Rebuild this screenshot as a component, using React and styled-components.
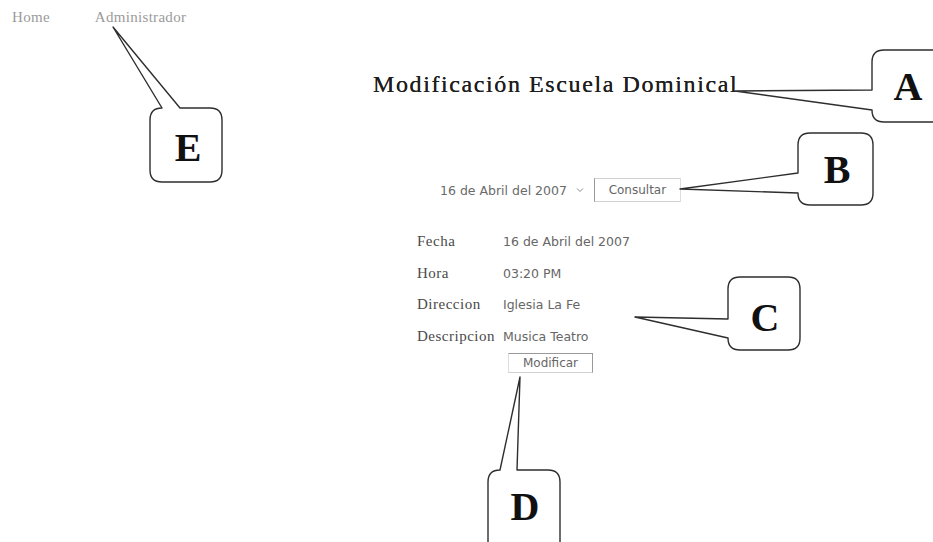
import React from "react";
import styled, { createGlobalStyle } from "styled-components";

const GlobalStyle = createGlobalStyle`
  html, body {
    margin: 0;
    padding: 0;
    background: #fff;
  }
  body {
    font-family: "Liberation Serif", serif;
  }
`;

const Page = styled.div`
  position: relative;
  width: 933px;
  height: 542px;
  overflow: hidden;
  background: #fff;
`;

/* top links */

const Nav = styled.nav`
  display: flex;
  gap: 45px;
  padding: 9px 0 0 12px;
  font: 15px/17px "Liberation Serif", serif;
  color: #9a9a9a;
`;

const NavLink = styled.a`
  color: inherit;
  text-decoration: none;
  letter-spacing: 0.3px;
`;

/* form */

const Main = styled.main`
  display: flex;
  flex-direction: column;
  align-items: flex-start;
  padding-left: 373px;
`;

const Title = styled.h1`
  margin: 45px 0 0;
  font: 400 24px/27px "Liberation Serif", serif;
  letter-spacing: 1.6px;
  color: #1e1e1e;
  text-shadow: 0 0 0.4px #1e1e1e;
`;

const QueryRow = styled.div`
  display: flex;
  align-items: center;
  margin: 80px 0 0 67px;
  font: 12.5px "DejaVu Sans", sans-serif;
  color: #6a6a6a;
`;

const Chevron = styled.svg`
  margin: 0 10px 0 9px;
  stroke: #888;
  fill: none;
`;

const Button = styled.button`
  width: ${p => p.$w}px;
  height: ${p => p.$h}px;
  padding: 0;
  background: #fff;
  border: 1px solid #d0d0d0;
  border-left-color: ${p => (p.$edge === "left" ? "#999" : "#ddd")};
  border-right-color: ${p => (p.$edge === "right" ? "#999" : "#ddd")};
  border-top-color: ${p => (p.$edge === "right" ? "#999" : "#d0d0d0")};
  font: 12px "DejaVu Sans", sans-serif;
  color: #666;
`;

const Fields = styled.div`
  display: grid;
  grid-template-columns: 86px auto;
  grid-auto-rows: 31.5px;
  align-items: center;
  margin: 24px 0 0 44px;
`;

const Label = styled.span`
  font: 15px "Liberation Serif", serif;
  letter-spacing: 0.5px;
  color: #4a4a4a;
`;

const Value = styled.span`
  font: 12.5px "DejaVu Sans", sans-serif;
  color: #666;
`;

const Actions = styled.div`
  grid-column: 2;
  align-self: start;
  margin: 1px 0 0 5px;
`;

/* callouts laid over the page */

const Overlay = styled.svg`
  position: absolute;
  left: 0;
  top: 0;
  pointer-events: none;
  fill: none;
  stroke: #2e2e2e;
  stroke-width: 1.4;
  stroke-linejoin: round;
`;

const Mark = styled.span`
  position: absolute;
  left: ${p => p.$x}px;
  top: ${p => p.$y}px;
  transform: translate(-50%, -50%);
  font: 700 40px/1 "Liberation Serif", serif;
  color: #111;
`;

const balloon = ({ x, y, w, h, r = 12, side, from, to, tip: [tx, ty] }) => {
  const R = x + w;
  const B = y + h;
  const top =
    side === "top" ? `H ${from} L ${tx} ${ty} L ${to} ${y} H ${R - r}` : `H ${R - r}`;
  const left =
    side === "left" ? `V ${to} L ${tx} ${ty} L ${x} ${from} V ${y + r}` : `V ${y + r}`;
  return `M ${x} ${y + r} Q ${x} ${y} ${x + r} ${y} ${top} Q ${R} ${y} ${R} ${y + r} V ${B - r} Q ${R} ${B} ${R - r} ${B} H ${x + r} Q ${x} ${B} ${x} ${B - r} ${left} Z`;
};

const callouts = [
  { id: "A", x: 872, y: 50, w: 85, h: 72, side: "left", from: 90, to: 110, tip: [735, 91], mark: [908, 87] },
  { id: "B", x: 798, y: 133, w: 75, h: 72, side: "left", from: 173, to: 193, tip: [680, 189], mark: [837, 170] },
  { id: "C", x: 728, y: 277, w: 72, h: 73, side: "left", from: 319, to: 338, tip: [635, 317], mark: [765, 318] },
  { id: "D", x: 488, y: 470, w: 72, h: 90, side: "top", from: 500, to: 517, tip: [520, 377], mark: [525, 507] },
  { id: "E", x: 150, y: 108, w: 72, h: 74, side: "top", from: 162, to: 180, tip: [113, 27], mark: [188, 148] },
];

const fields = [
  ["Fecha", "16 de Abril del 2007"],
  ["Hora", "03:20 PM"],
  ["Direccion", "Iglesia La Fe"],
  ["Descripcion", "Musica Teatro"],
];

const App = () => {
  return (
    <Page>
      <GlobalStyle />
      <Nav>
        <NavLink href="#">Home</NavLink>
        <NavLink href="#">Administrador</NavLink>
      </Nav>
      <Main>
        <Title>Modificación Escuela Dominical</Title>
        <QueryRow>
          <span>16 de Abril del 2007</span>
          <Chevron width="8" height="6" viewBox="0 0 8 6">
            <polyline points="1,1.5 4,4.5 7,1.5" strokeWidth="1" />
          </Chevron>
          <Button $w={87} $h={24} $edge="left">Consultar</Button>
        </QueryRow>
        <Fields>
          {fields.map(([label, value]) => (
            <React.Fragment key={label}>
              <Label>{label}</Label>
              <Value>{value}</Value>
            </React.Fragment>
          ))}
          <Actions>
            <Button $w={85} $h={20} $edge="right">Modificar</Button>
          </Actions>
        </Fields>
      </Main>
      <Overlay width="933" height="542" viewBox="0 0 933 542">
        {callouts.map(c => (
          <path key={c.id} d={balloon(c)} />
        ))}
      </Overlay>
      {callouts.map(c => (
        <Mark key={c.id} $x={c.mark[0]} $y={c.mark[1]}>
          {c.id}
        </Mark>
      ))}
    </Page>
  );
};

export default App;
